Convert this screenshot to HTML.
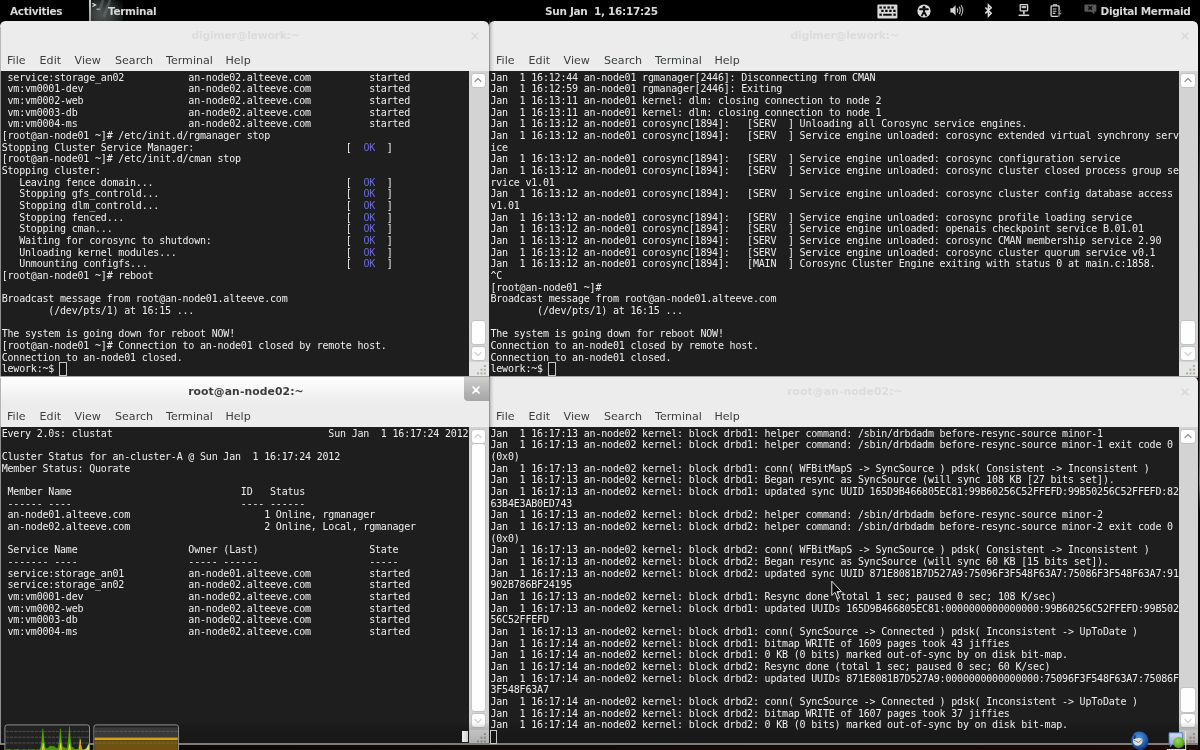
<!DOCTYPE html>
<html lang="en">
<head>
<meta charset="utf-8">
<title>Terminal</title>
<style>
html,body{margin:0;padding:0;}
body{width:1200px;height:750px;overflow:hidden;position:relative;background:#120907;font-family:"DejaVu Sans","Liberation Sans",sans-serif;}
#desk{position:absolute;left:0;top:0;width:1200px;height:750px;background:linear-gradient(90deg,#0b0908 0%,#0f0a08 35%,#160a07 60%,#1b0a07 85%,#200a07 100%);}
#deskr{position:absolute;left:1198px;top:21px;width:2px;height:729px;background:linear-gradient(90deg,#0a0606 0%,#0a0606 30%,rgba(10,6,6,0) 70%),linear-gradient(180deg,#050505 0px,#0a0505 90px,#5a0e08 130px,#b01a0a 170px,#7a1208 230px,#c4200c 300px,#8a1408 360px,#c02a0c 420px,#d8680e 462px,#a01808 476px,#120806 492px,#060505 729px);}
#topbar{position:absolute;left:0;top:0;width:1200px;height:28px;background:#000;}
.gl{will-change:transform;}
.tb{position:absolute;top:3.7px;font-weight:bold;font-size:10.5px;line-height:14px;color:#d8d8d8;white-space:pre;letter-spacing:-0.32px;}
.win{position:absolute;background:#ececec;overflow:hidden;}
.title{position:absolute;left:0;top:0;right:0;height:26px;}
.ttext{position:absolute;left:0;width:100%;text-align:center;top:7.8px;font-weight:bold;font-size:10.8px;line-height:14px;color:#dcdcdc;white-space:pre;}
.act .ttext{color:#3c3c3c;}
.act .title{background:linear-gradient(180deg,#ffffff 0%,#f6f6f6 50%,#ececec 100%);}
.x{position:absolute;}
.menu{position:absolute;top:31px;font-size:11.1px;line-height:14px;color:#3a3e40;white-space:pre;}
.term{position:absolute;background:#1e1e1e;}
.sb{position:absolute;background:#d3d3d3;}
.btn{position:absolute;left:2.6px;width:13.6px;background:#fefefe;border-radius:2.2px;box-shadow:0 0 0 0.7px #bcc0bc;}
.grip{position:absolute;left:0;width:100%;background:#e6e6e6;}
.l{position:absolute;white-space:pre;font-family:"DejaVu Sans Mono","Liberation Mono",monospace;font-size:10px;line-height:11.6667px;height:11.6667px;letter-spacing:-0.187px;color:#eeeeee;}
.ok{color:#6b6bd6;}
.cur{position:absolute;width:7.6px;height:13.5px;border:0.9px solid #c6c6c6;box-sizing:border-box;margin-top:-1px;margin-left:-0.8px;background:#151515;}
svg{position:absolute;overflow:visible;}
</style>
</head>
<body>
<div id="desk"></div>
<div id="deskr"></div>

<div id="topbar">
<div style="position:absolute;left:89px;top:0;width:34px;height:21px;background:radial-gradient(ellipse 26px 24px at 13px 15px,#4c5452 0%,#3a403f 35%,#1c1f1f 70%,#000 100%)"></div>
<div style="position:absolute;left:89px;top:0;width:1.6px;height:21px;background:linear-gradient(180deg,#cfcfcf,#9a9a9a)"></div>
<svg style="left:89px;top:0" width="34" height="21" viewBox="0 0 34 21"><path d="M3.4 3.2L6.6 4.9L3.4 6.6" stroke="#e8e8e8" stroke-width="1.1" fill="none"/><path d="M7.6 9.2H11.2" stroke="#cfcfcf" stroke-width="1.1"/><path d="M14 0L10.4 11M21 0L15 17" stroke="#69716f" stroke-width="2.6" opacity=".55"/></svg>
<svg style="left:876.6px;top:3.5px" width="21" height="15" viewBox="0 0 21 15"><rect x="0.4" y="0.4" width="20" height="14.2" rx="1" fill="#d9d9d9"/><rect x="2.4" y="2.4" width="2.4" height="2.2" fill="#0a0a0a"/><rect x="6.4" y="2.4" width="2.4" height="2.2" fill="#0a0a0a"/><rect x="10.4" y="2.4" width="2.4" height="2.2" fill="#0a0a0a"/><rect x="14.4" y="2.4" width="2.4" height="2.2" fill="#0a0a0a"/><rect x="4.2" y="5.8" width="2.4" height="2.2" fill="#0a0a0a"/><rect x="8.2" y="5.8" width="2.4" height="2.2" fill="#0a0a0a"/><rect x="12.2" y="5.8" width="2.4" height="2.2" fill="#0a0a0a"/><rect x="16.2" y="5.8" width="2.4" height="2.2" fill="#0a0a0a"/><rect x="2.4" y="9.6" width="2.4" height="2.2" fill="#0a0a0a"/><rect x="16.4" y="9.6" width="2.4" height="2.2" fill="#0a0a0a"/><rect x="6.2" y="9.8" width="8.6" height="1.9" fill="#0a0a0a"/></svg>
<svg style="left:916.6px;top:3.7px" width="14" height="14" viewBox="-7 -7 14 14"><circle r="6.6" fill="#dcdcdc"/><circle cy="-3.8" r="1.5" fill="#0a0a0a"/><path d="M-3.9 -1.7H3.9M0 -1.8V1.2M0 0.8L-2 4.4M0 0.8L2 4.4" stroke="#0a0a0a" stroke-width="1.9" stroke-linecap="round" fill="none"/></svg>
<svg style="left:949.8px;top:4.1px" width="15" height="13" viewBox="0 0 15 13"><path d="M0.4 4.2H2.6L5.6 1.2V11.6L2.6 8.6H0.4Z" fill="#d6d6d6"/><path d="M7.2 4.3Q8.6 6.4 7.2 8.5" stroke="#d6d6d6" stroke-width="1.2" fill="none"/><path d="M9.1 2.7Q11.6 6.4 9.1 10.1" stroke="#c4c4c4" stroke-width="1.2" fill="none"/><path d="M11 1.1Q14.6 6.4 11 11.7" stroke="#a8a8a8" stroke-width="1.2" fill="none"/></svg>
<svg style="left:984.4px;top:4.3px" width="9" height="13.4" viewBox="0 0 10 15"><path d="M1.4 4L8 10.4L4.9 13.6V0.9L8 4.1L1.4 10.5" stroke="#dcdcdc" stroke-width="1.7" fill="none" stroke-linejoin="miter"/></svg>
<svg style="left:1017.6px;top:4.4px" width="12" height="13" viewBox="0 0 12 13"><rect x="2.2" y="0.6" width="7.4" height="6.2" rx="0.6" fill="none" stroke="#d8d8d8" stroke-width="1.3"/><rect x="3.6" y="2" width="4.6" height="2.2" fill="#bdbdbd"/><path d="M5.9 7V10.6" stroke="#d8d8d8" stroke-width="1.6"/><path d="M0.6 11.3H11.2" stroke="#d8d8d8" stroke-width="1.5"/></svg>
<svg style="left:1049.6px;top:4.2px" width="13" height="14" viewBox="0 0 13 14"><path d="M3.6 1.6V0.7H6.6V1.6" stroke="#d8d8d8" stroke-width="1.1" fill="none"/><rect x="1.1" y="1.9" width="8" height="10.4" rx="0.8" fill="none" stroke="#d8d8d8" stroke-width="1.3"/><path d="M2.8 5H6.4M2.8 7.2H6.4M2.8 9.4H5.4" stroke="#d0d0d0" stroke-width="1.1"/><path d="M9.8 6.2L7.2 10.2H9.2L8 13.6L12.2 8.8H10L11.4 6.2Z" fill="#9c9c9c" stroke="#000" stroke-width="0.5"/></svg>
<svg style="left:1083.6px;top:4.4px" width="13" height="12" viewBox="0 0 13 12"><path d="M1.6 0.4H11.2Q12.4 0.4 12.4 1.6V6.6Q12.4 7.8 11.2 7.8H10.4V10.6L7.4 7.8H1.6Q0.4 7.8 0.4 6.6V1.6Q0.4 0.4 1.6 0.4Z" fill="#585858"/><path d="M4.4 2.2L8 5.8M8 2.2L4.4 5.8" stroke="#0a0a0a" stroke-width="1.5"/></svg>
<div class="gl">
<div class="tb" id="tb1" style="left:10px">Activities</div>
<div class="tb" id="tb2" style="left:108px">Terminal</div>
<div class="tb" id="tb3" style="left:545px">Sun Jan  1, 16:17:25</div>
<div class="tb" id="tb4" style="left:1100.5px">Digital Mermaid</div>
</div>
</div>

<div style="position:absolute;left:0;top:375.5px;width:1198px;height:2.4px;background:#a4a4a4"></div>
<div style="position:absolute;left:488.5px;top:21px;width:1.2px;height:722px;background:#3a3a3a"></div>
<div class="win" style="left:0.0px;top:20.9px;width:488.7px;height:354.8px;border-radius:5.5px 5.5px 0 0;">
<div class="title"></div>
<svg class="x" style="left:470.4px;top:10.0px" width="10" height="10" viewBox="-5 -5 10 10"><path d="M-2.9 -2.9L2.9 2.9M2.9 -2.9L-2.9 2.9" stroke="#d9dbd9" stroke-width="1.7" stroke-linecap="round" fill="none"/></svg>
<div class="gl">
<div class="ttext" style="top:8.4px;left:1.2px;letter-spacing:-0.25px">digimer@lework:~</div>
<div class="menu" style="left:7.0px;top:32.6px">File</div>
<div class="menu" style="left:39.6px;top:32.6px">Edit</div>
<div class="menu" style="left:74.6px;top:32.6px">View</div>
<div class="menu" style="left:115.0px;top:32.6px">Search</div>
<div class="menu" style="left:166.0px;top:32.6px">Terminal</div>
<div class="menu" style="left:225.4px;top:32.6px">Help</div>
</div>
<div class="term" style="left:0;top:50.2px;width:469.0px;height:304.6px"></div>
<div class="sb" style="left:469.0px;top:50.2px;width:19.7px;height:304.6px">
<div class="btn" style="top:2.5px;height:13.2px"></div><svg style="left:4.4px;top:5.1px" width="10" height="8" viewBox="-5 -4 10 8"><path d="M-3 1.5L0 -1.5L3 1.5" stroke="#8e8e8e" stroke-width="1.2" fill="none" stroke-linecap="round" stroke-linejoin="round"/></svg>
<div class="btn" style="top:249.6px;height:23.4px"></div>
<div class="btn" style="top:275.6px;height:13.4px"></div><svg style="left:4.4px;top:278.5px" width="10" height="8" viewBox="-5 -4 10 8"><path d="M-3 -1.5L0 1.5L3 -1.5" stroke="#d0d0d0" stroke-width="1.2" fill="none" stroke-linecap="round" stroke-linejoin="round"/></svg>
<div class="grip" style="top:291.2px;height:13.4px"></div>
<svg style="left:7.7px;top:294.3px" width="12" height="10" viewBox="0 0 12 10"><rect x="6.9" y="0.0" width="2" height="2" fill="#aab09e"/><rect x="3.5" y="3.7" width="2" height="2" fill="#aab09e"/><rect x="6.9" y="3.7" width="2" height="2" fill="#aab09e"/><rect x="0.0" y="7.4" width="2" height="2" fill="#aab09e"/><rect x="3.5" y="7.4" width="2" height="2" fill="#aab09e"/><rect x="6.9" y="7.4" width="2" height="2" fill="#aab09e"/></svg>
</div>
</div>
<div class="win" style="left:489.3px;top:20.9px;width:708.7px;height:354.8px;border-radius:5.5px 5.5px 0 0;">
<div class="title"></div>
<div style="position:absolute;left:0;top:0;width:5px;height:100%;background:linear-gradient(90deg,rgba(90,90,90,.75) 0%,rgba(150,150,150,.35) 35%,rgba(200,200,200,0) 100%)"></div>
<svg class="x" style="left:690.4px;top:10.0px" width="10" height="10" viewBox="-5 -5 10 10"><path d="M-2.9 -2.9L2.9 2.9M2.9 -2.9L-2.9 2.9" stroke="#d9dbd9" stroke-width="1.7" stroke-linecap="round" fill="none"/></svg>
<div class="gl">
<div class="ttext" style="top:8.4px;left:1.2px;letter-spacing:-0.25px">digimer@lework:~</div>
<div class="menu" style="left:7.0px;top:32.6px">File</div>
<div class="menu" style="left:39.6px;top:32.6px">Edit</div>
<div class="menu" style="left:74.6px;top:32.6px">View</div>
<div class="menu" style="left:115.0px;top:32.6px">Search</div>
<div class="menu" style="left:166.0px;top:32.6px">Terminal</div>
<div class="menu" style="left:225.4px;top:32.6px">Help</div>
</div>
<div class="term" style="left:0;top:50.2px;width:689.5px;height:304.6px"></div>
<div class="sb" style="left:689.5px;top:50.2px;width:19.2px;height:304.6px">
<div class="btn" style="top:2.5px;height:13.2px"></div><svg style="left:4.4px;top:5.1px" width="10" height="8" viewBox="-5 -4 10 8"><path d="M-3 1.5L0 -1.5L3 1.5" stroke="#8e8e8e" stroke-width="1.2" fill="none" stroke-linecap="round" stroke-linejoin="round"/></svg>
<div class="btn" style="top:249.6px;height:23.4px"></div>
<div class="btn" style="top:275.6px;height:13.4px"></div><svg style="left:4.4px;top:278.5px" width="10" height="8" viewBox="-5 -4 10 8"><path d="M-3 -1.5L0 1.5L3 -1.5" stroke="#d0d0d0" stroke-width="1.2" fill="none" stroke-linecap="round" stroke-linejoin="round"/></svg>
<div class="grip" style="top:291.2px;height:13.4px"></div>
<svg style="left:7.7px;top:294.3px" width="12" height="10" viewBox="0 0 12 10"><rect x="6.9" y="0.0" width="2" height="2" fill="#aab09e"/><rect x="3.5" y="3.7" width="2" height="2" fill="#aab09e"/><rect x="6.9" y="3.7" width="2" height="2" fill="#aab09e"/><rect x="0.0" y="7.4" width="2" height="2" fill="#aab09e"/><rect x="3.5" y="7.4" width="2" height="2" fill="#aab09e"/><rect x="6.9" y="7.4" width="2" height="2" fill="#aab09e"/></svg>
</div>
</div>
<div class="win act" style="left:0.0px;top:377.3px;width:488.7px;height:365.7px;border-radius:0;">
<div class="title"></div>
<div style="position:absolute;left:464.3px;top:0;width:24.4px;height:23.6px;border-radius:0 0 0 4px;background:linear-gradient(180deg,#cfcfcf 0%,#b4b4b4 60%,#a6a6a6 100%)"></div>
<svg class="x" style="left:470.7px;top:7.3px" width="10" height="10" viewBox="-5 -5 10 10"><path d="M-2.9 -2.9L2.9 2.9M2.9 -2.9L-2.9 2.9" stroke="#ffffff" stroke-width="1.9" stroke-linecap="round" fill="none"/></svg>
<div class="gl">
<div class="ttext" style="top:7.9px;left:1.6px;letter-spacing:0.09px">root@an-node02:~</div>
<div class="menu" style="left:7.0px;top:33.1px">File</div>
<div class="menu" style="left:39.6px;top:33.1px">Edit</div>
<div class="menu" style="left:74.6px;top:33.1px">View</div>
<div class="menu" style="left:115.0px;top:33.1px">Search</div>
<div class="menu" style="left:166.0px;top:33.1px">Terminal</div>
<div class="menu" style="left:225.4px;top:33.1px">Help</div>
</div>
<div class="term" style="left:0;top:50.0px;width:469.0px;height:315.7px"></div>
<div class="sb" style="left:469.0px;top:50.0px;width:19.7px;height:315.7px">
<div class="btn" style="top:2.5px;height:13.2px"></div><svg style="left:4.4px;top:5.1px" width="10" height="8" viewBox="-5 -4 10 8"><path d="M-3 1.5L0 -1.5L3 1.5" stroke="#cfcfcf" stroke-width="1.2" fill="none" stroke-linecap="round" stroke-linejoin="round"/></svg>
<div class="btn" style="top:17.0px;height:267.1px"></div>
<div class="btn" style="top:286.7px;height:13.4px"></div><svg style="left:4.4px;top:289.6px" width="10" height="8" viewBox="-5 -4 10 8"><path d="M-3 -1.5L0 1.5L3 -1.5" stroke="#d0d0d0" stroke-width="1.2" fill="none" stroke-linecap="round" stroke-linejoin="round"/></svg>
<div class="grip" style="top:302.3px;height:13.4px"></div>
<svg style="left:7.7px;top:305.4px" width="12" height="10" viewBox="0 0 12 10"><rect x="6.9" y="0.0" width="2" height="2" fill="#aab09e"/><rect x="3.5" y="3.7" width="2" height="2" fill="#aab09e"/><rect x="6.9" y="3.7" width="2" height="2" fill="#aab09e"/><rect x="0.0" y="7.4" width="2" height="2" fill="#aab09e"/><rect x="3.5" y="7.4" width="2" height="2" fill="#aab09e"/><rect x="6.9" y="7.4" width="2" height="2" fill="#aab09e"/></svg>
</div>
</div>
<div class="win" style="left:489.3px;top:377.3px;width:708.7px;height:365.7px;border-radius:0 5px 0 0;">
<div class="title"></div>
<div style="position:absolute;left:0;top:0;width:5px;height:100%;background:linear-gradient(90deg,rgba(90,90,90,.75) 0%,rgba(150,150,150,.35) 35%,rgba(200,200,200,0) 100%)"></div>
<svg class="x" style="left:690.4px;top:10.0px" width="10" height="10" viewBox="-5 -5 10 10"><path d="M-2.9 -2.9L2.9 2.9M2.9 -2.9L-2.9 2.9" stroke="#d9dbd9" stroke-width="1.7" stroke-linecap="round" fill="none"/></svg>
<div class="gl">
<div class="ttext" style="top:7.9px;left:1.6px;letter-spacing:0.09px">root@an-node02:~</div>
<div class="menu" style="left:7.0px;top:33.1px">File</div>
<div class="menu" style="left:39.6px;top:33.1px">Edit</div>
<div class="menu" style="left:74.6px;top:33.1px">View</div>
<div class="menu" style="left:115.0px;top:33.1px">Search</div>
<div class="menu" style="left:166.0px;top:33.1px">Terminal</div>
<div class="menu" style="left:225.4px;top:33.1px">Help</div>
</div>
<div class="term" style="left:0;top:50.0px;width:689.5px;height:315.7px"></div>
<div class="sb" style="left:689.5px;top:50.0px;width:19.2px;height:315.7px">
<div class="btn" style="top:2.5px;height:13.2px"></div><svg style="left:4.4px;top:5.1px" width="10" height="8" viewBox="-5 -4 10 8"><path d="M-3 1.5L0 -1.5L3 1.5" stroke="#8e8e8e" stroke-width="1.2" fill="none" stroke-linecap="round" stroke-linejoin="round"/></svg>
<div class="btn" style="top:260.4px;height:24.1px"></div>
<div class="btn" style="top:286.7px;height:13.4px"></div><svg style="left:4.4px;top:289.6px" width="10" height="8" viewBox="-5 -4 10 8"><path d="M-3 -1.5L0 1.5L3 -1.5" stroke="#d0d0d0" stroke-width="1.2" fill="none" stroke-linecap="round" stroke-linejoin="round"/></svg>
<div class="grip" style="top:302.3px;height:13.4px"></div>
<svg style="left:7.7px;top:305.4px" width="12" height="10" viewBox="0 0 12 10"><rect x="6.9" y="0.0" width="2" height="2" fill="#aab09e"/><rect x="3.5" y="3.7" width="2" height="2" fill="#aab09e"/><rect x="6.9" y="3.7" width="2" height="2" fill="#aab09e"/><rect x="0.0" y="7.4" width="2" height="2" fill="#aab09e"/><rect x="3.5" y="7.4" width="2" height="2" fill="#aab09e"/><rect x="6.9" y="7.4" width="2" height="2" fill="#aab09e"/></svg>
</div>
</div>
<div style="position:absolute;left:0;top:722px;width:1198px;height:21px;background:linear-gradient(180deg,rgba(0,0,0,0) 0%,rgba(0,0,0,.14) 30%,rgba(0,0,0,.24) 100%)"></div>
<div style="position:absolute;left:0;top:743px;width:1198px;height:1.6px;background:#7c7c7c"></div>
<div style="position:absolute;left:0;top:378px;width:1.1px;height:366px;background:linear-gradient(180deg,#b4b4b4 0,#b4b4b4 48px,#8e8e8e 50px,#8e8e8e 100%)"></div>
<div style="position:absolute;left:0;top:27px;width:1.1px;height:349px;background:linear-gradient(180deg,#b8b8b8 0,#b8b8b8 43px,#8e8e8e 45px,#8e8e8e 100%)"></div>

<div class="gl" id="t1">
<div class="l" style="left:7.53px;top:72.00px">service:storage_an02           an-node02.alteeve.com          started</div>
<div class="l" style="left:7.53px;top:83.00px">vm:vm0001-dev                  an-node02.alteeve.com          started</div>
<div class="l" style="left:7.53px;top:95.00px">vm:vm0002-web                  an-node02.alteeve.com          started</div>
<div class="l" style="left:7.53px;top:107.00px">vm:vm0003-db                   an-node02.alteeve.com          started</div>
<div class="l" style="left:7.53px;top:118.00px">vm:vm0004-ms                   an-node02.alteeve.com          started</div>
<div class="l" style="left:1.70px;top:130.00px">[root@an-node01 ~]# /etc/init.d/rgmanager stop</div>
<div class="l" style="left:1.70px;top:142.00px">Stopping Cluster Service Manager:                          [  <span class="ok">OK</span>  ]</div>
<div class="l" style="left:1.70px;top:153.00px">[root@an-node01 ~]# /etc/init.d/cman stop</div>
<div class="l" style="left:1.70px;top:165.00px">Stopping cluster:</div>
<div class="l" style="left:19.20px;top:177.00px">Leaving fence domain...                                 [  <span class="ok">OK</span>  ]</div>
<div class="l" style="left:19.20px;top:188.00px">Stopping gfs_controld...                                [  <span class="ok">OK</span>  ]</div>
<div class="l" style="left:19.20px;top:200.00px">Stopping dlm_controld...                                [  <span class="ok">OK</span>  ]</div>
<div class="l" style="left:19.20px;top:212.00px">Stopping fenced...                                      [  <span class="ok">OK</span>  ]</div>
<div class="l" style="left:19.20px;top:223.00px">Stopping cman...                                        [  <span class="ok">OK</span>  ]</div>
<div class="l" style="left:19.20px;top:235.00px">Waiting for corosync to shutdown:                       [  <span class="ok">OK</span>  ]</div>
<div class="l" style="left:19.20px;top:247.00px">Unloading kernel modules...                             [  <span class="ok">OK</span>  ]</div>
<div class="l" style="left:19.20px;top:258.00px">Unmounting configfs...                                  [  <span class="ok">OK</span>  ]</div>
<div class="l" style="left:1.70px;top:270.00px">[root@an-node01 ~]# reboot</div>
<div class="l" style="left:1.70px;top:293.00px">Broadcast message from root@an-node01.alteeve.com</div>
<div class="l" style="left:48.37px;top:305.00px">(/dev/pts/1) at 16:15 ...</div>
<div class="l" style="left:1.70px;top:328.00px">The system is going down for reboot NOW!</div>
<div class="l" style="left:1.70px;top:340.00px">[root@an-node01 ~]# Connection to an-node01 closed by remote host.</div>
<div class="l" style="left:1.70px;top:352.00px">Connection to an-node01 closed.</div>
<div class="l" style="left:1.70px;top:363.00px">lework:~$</div>
<div class="cur" style="left:60.03px;top:363.00px"></div>
</div>
<div class="gl" id="t2">
<div class="l" style="left:490.40px;top:72.00px">Jan  1 16:12:44 an-node01 rgmanager[2446]: Disconnecting from CMAN</div>
<div class="l" style="left:490.40px;top:83.00px">Jan  1 16:12:59 an-node01 rgmanager[2446]: Exiting</div>
<div class="l" style="left:490.40px;top:95.00px">Jan  1 16:13:11 an-node01 kernel: dlm: closing connection to node 2</div>
<div class="l" style="left:490.40px;top:107.00px">Jan  1 16:13:11 an-node01 kernel: dlm: closing connection to node 1</div>
<div class="l" style="left:490.40px;top:118.00px">Jan  1 16:13:12 an-node01 corosync[1894]:   [SERV  ] Unloading all Corosync service engines.</div>
<div class="l" style="left:490.40px;top:130.00px">Jan  1 16:13:12 an-node01 corosync[1894]:   [SERV  ] Service engine unloaded: corosync extended virtual synchrony serv</div>
<div class="l" style="left:490.40px;top:142.00px">ice</div>
<div class="l" style="left:490.40px;top:153.00px">Jan  1 16:13:12 an-node01 corosync[1894]:   [SERV  ] Service engine unloaded: corosync configuration service</div>
<div class="l" style="left:490.40px;top:165.00px">Jan  1 16:13:12 an-node01 corosync[1894]:   [SERV  ] Service engine unloaded: corosync cluster closed process group se</div>
<div class="l" style="left:490.40px;top:177.00px">rvice v1.01</div>
<div class="l" style="left:490.40px;top:188.00px">Jan  1 16:13:12 an-node01 corosync[1894]:   [SERV  ] Service engine unloaded: corosync cluster config database access</div>
<div class="l" style="left:490.40px;top:200.00px">v1.01</div>
<div class="l" style="left:490.40px;top:212.00px">Jan  1 16:13:12 an-node01 corosync[1894]:   [SERV  ] Service engine unloaded: corosync profile loading service</div>
<div class="l" style="left:490.40px;top:223.00px">Jan  1 16:13:12 an-node01 corosync[1894]:   [SERV  ] Service engine unloaded: openais checkpoint service B.01.01</div>
<div class="l" style="left:490.40px;top:235.00px">Jan  1 16:13:12 an-node01 corosync[1894]:   [SERV  ] Service engine unloaded: corosync CMAN membership service 2.90</div>
<div class="l" style="left:490.40px;top:247.00px">Jan  1 16:13:12 an-node01 corosync[1894]:   [SERV  ] Service engine unloaded: corosync cluster quorum service v0.1</div>
<div class="l" style="left:490.40px;top:258.00px">Jan  1 16:13:12 an-node01 corosync[1894]:   [MAIN  ] Corosync Cluster Engine exiting with status 0 at main.c:1858.</div>
<div class="l" style="left:490.40px;top:270.00px">^C</div>
<div class="l" style="left:490.40px;top:282.00px">[root@an-node01 ~]#</div>
<div class="l" style="left:490.40px;top:293.00px">Broadcast message from root@an-node01.alteeve.com</div>
<div class="l" style="left:537.07px;top:305.00px">(/dev/pts/1) at 16:15 ...</div>
<div class="l" style="left:490.40px;top:328.00px">The system is going down for reboot NOW!</div>
<div class="l" style="left:490.40px;top:340.00px">Connection to an-node01 closed by remote host.</div>
<div class="l" style="left:490.40px;top:352.00px">Connection to an-node01 closed.</div>
<div class="l" style="left:490.40px;top:363.00px">lework:~$</div>
<div class="cur" style="left:548.73px;top:363.00px"></div>
</div>
<div class="gl" id="t3">
<div class="l" style="left:1.70px;top:428.00px">Every 2.0s: clustat                                     Sun Jan  1 16:17:24 2012</div>
<div class="l" style="left:1.70px;top:451.00px">Cluster Status for an-cluster-A @ Sun Jan  1 16:17:24 2012</div>
<div class="l" style="left:1.70px;top:463.00px">Member Status: Quorate</div>
<div class="l" style="left:7.53px;top:486.00px">Member Name                             ID   Status</div>
<div class="l" style="left:7.53px;top:498.00px">------ ----                             ---- ------</div>
<div class="l" style="left:7.53px;top:509.00px">an-node01.alteeve.com                       1 Online, rgmanager</div>
<div class="l" style="left:7.53px;top:521.00px">an-node02.alteeve.com                       2 Online, Local, rgmanager</div>
<div class="l" style="left:7.53px;top:544.00px">Service Name                   Owner (Last)                   State</div>
<div class="l" style="left:7.53px;top:556.00px">------- ----                   ----- ------                   -----</div>
<div class="l" style="left:7.53px;top:568.00px">service:storage_an01           an-node01.alteeve.com          started</div>
<div class="l" style="left:7.53px;top:579.00px">service:storage_an02           an-node02.alteeve.com          started</div>
<div class="l" style="left:7.53px;top:591.00px">vm:vm0001-dev                  an-node02.alteeve.com          started</div>
<div class="l" style="left:7.53px;top:603.00px">vm:vm0002-web                  an-node02.alteeve.com          started</div>
<div class="l" style="left:7.53px;top:614.00px">vm:vm0003-db                   an-node02.alteeve.com          started</div>
<div class="l" style="left:7.53px;top:626.00px">vm:vm0004-ms                   an-node02.alteeve.com          started</div>
</div>
<div class="gl" id="t4">
<div class="l" style="left:490.40px;top:428.00px">Jan  1 16:17:13 an-node02 kernel: block drbd1: helper command: /sbin/drbdadm before-resync-source minor-1</div>
<div class="l" style="left:490.40px;top:439.00px">Jan  1 16:17:13 an-node02 kernel: block drbd1: helper command: /sbin/drbdadm before-resync-source minor-1 exit code 0</div>
<div class="l" style="left:490.40px;top:451.00px">(0x0)</div>
<div class="l" style="left:490.40px;top:463.00px">Jan  1 16:17:13 an-node02 kernel: block drbd1: conn( WFBitMapS -&gt; SyncSource ) pdsk( Consistent -&gt; Inconsistent )</div>
<div class="l" style="left:490.40px;top:474.00px">Jan  1 16:17:13 an-node02 kernel: block drbd1: Began resync as SyncSource (will sync 108 KB [27 bits set]).</div>
<div class="l" style="left:490.40px;top:486.00px">Jan  1 16:17:13 an-node02 kernel: block drbd1: updated sync UUID 165D9B466805EC81:99B60256C52FFEFD:99B50256C52FFEFD:82</div>
<div class="l" style="left:490.40px;top:498.00px">63B4E3AB0ED743</div>
<div class="l" style="left:490.40px;top:509.00px">Jan  1 16:17:13 an-node02 kernel: block drbd2: helper command: /sbin/drbdadm before-resync-source minor-2</div>
<div class="l" style="left:490.40px;top:521.00px">Jan  1 16:17:13 an-node02 kernel: block drbd2: helper command: /sbin/drbdadm before-resync-source minor-2 exit code 0</div>
<div class="l" style="left:490.40px;top:533.00px">(0x0)</div>
<div class="l" style="left:490.40px;top:544.00px">Jan  1 16:17:13 an-node02 kernel: block drbd2: conn( WFBitMapS -&gt; SyncSource ) pdsk( Consistent -&gt; Inconsistent )</div>
<div class="l" style="left:490.40px;top:556.00px">Jan  1 16:17:13 an-node02 kernel: block drbd2: Began resync as SyncSource (will sync 60 KB [15 bits set]).</div>
<div class="l" style="left:490.40px;top:568.00px">Jan  1 16:17:13 an-node02 kernel: block drbd2: updated sync UUID 871E8081B7D527A9:75096F3F548F63A7:75086F3F548F63A7:91</div>
<div class="l" style="left:490.40px;top:579.00px">902B786BF24195</div>
<div class="l" style="left:490.40px;top:591.00px">Jan  1 16:17:13 an-node02 kernel: block drbd1: Resync done (total 1 sec; paused 0 sec; 108 K/sec)</div>
<div class="l" style="left:490.40px;top:603.00px">Jan  1 16:17:13 an-node02 kernel: block drbd1: updated UUIDs 165D9B466805EC81:0000000000000000:99B60256C52FFEFD:99B502</div>
<div class="l" style="left:490.40px;top:614.00px">56C52FFEFD</div>
<div class="l" style="left:490.40px;top:626.00px">Jan  1 16:17:13 an-node02 kernel: block drbd1: conn( SyncSource -&gt; Connected ) pdsk( Inconsistent -&gt; UpToDate )</div>
<div class="l" style="left:490.40px;top:638.00px">Jan  1 16:17:14 an-node02 kernel: block drbd1: bitmap WRITE of 1609 pages took 43 jiffies</div>
<div class="l" style="left:490.40px;top:649.00px">Jan  1 16:17:14 an-node02 kernel: block drbd1: 0 KB (0 bits) marked out-of-sync by on disk bit-map.</div>
<div class="l" style="left:490.40px;top:661.00px">Jan  1 16:17:14 an-node02 kernel: block drbd2: Resync done (total 1 sec; paused 0 sec; 60 K/sec)</div>
<div class="l" style="left:490.40px;top:673.00px">Jan  1 16:17:14 an-node02 kernel: block drbd2: updated UUIDs 871E8081B7D527A9:0000000000000000:75096F3F548F63A7:75086F</div>
<div class="l" style="left:490.40px;top:684.00px">3F548F63A7</div>
<div class="l" style="left:490.40px;top:696.00px">Jan  1 16:17:14 an-node02 kernel: block drbd2: conn( SyncSource -&gt; Connected ) pdsk( Inconsistent -&gt; UpToDate )</div>
<div class="l" style="left:490.40px;top:708.00px">Jan  1 16:17:14 an-node02 kernel: block drbd2: bitmap WRITE of 1607 pages took 37 jiffies</div>
<div class="l" style="left:490.40px;top:719.00px">Jan  1 16:17:14 an-node02 kernel: block drbd2: 0 KB (0 bits) marked out-of-sync by on disk bit-map.</div>
<div class="cur" style="left:490.40px;top:731.00px"></div>
</div>

<div style="position:absolute;left:462.4px;top:730.8px;width:5.8px;height:11.4px;background:linear-gradient(90deg,#f4f4f4,#cfcfcf)"></div>
<svg style="left:3.6px;top:723.9px" width="87" height="27" viewBox="0 0 87 27"><rect x="0.9" y="0.9" width="84.6" height="30" rx="2.2" fill="#222222" stroke="#9c9c9c" stroke-width="0.9"/><path d="M1.6 7.4H85" stroke="#555555" stroke-width="0.9" stroke-dasharray="3.2 1"/><path d="M1.6 13.2H85" stroke="#555555" stroke-width="0.9" stroke-dasharray="3.2 1"/><path d="M1.6 19.0H85" stroke="#555555" stroke-width="0.9" stroke-dasharray="3.2 1"/><path d="M1.5 27.0L1.5 25.4L2.2 25.2L3.1 25.1L4.0 25.4L4.9 25.1L5.8 25.1L6.7 25.4L7.6 25.8L8.5 25.7L9.4 25.7L10.3 25.2L11.2 25.5L12.1 25.2L13.0 25.2L13.9 25.1L14.8 25.2L15.7 25.8L16.6 25.7L17.5 25.7L18.4 25.7L19.3 25.2L20.2 25.3L21.1 25.6L22.0 25.7L22.9 25.8L23.8 25.8L24.7 25.1L25.6 25.5L26.5 25.6L27.4 25.5L28.3 25.2L29.2 25.4L30.1 25.1L31.0 25.8L31.9 25.8L32.8 25.5L33.7 25.3L34.6 25.8L35.5 25.5L36.2 23.6L36.5 23.2L37.8 14.8L38.5 4.6L39.2 4.6L40.0 14.8L41.3 23.2L43.0 24.4L45.5 22.2L47.0 21.6L48.2 22.6L49.6 21.8L51.2 23.2L53.0 24.2L53.9 23.4L55.3 14.9L56.0 4.6L56.8 4.6L57.5 14.9L58.9 23.4L59.4 22.6L60.6 23.2L61.8 24.2L63.0 23.6L64.3 14.1L65.1 2.4L65.8 2.4L66.5 14.1L67.8 23.6L68.6 22.8L70.0 24.6L72.0 25.2L73.6 24.8L74.2 24.6L75.2 19.6L75.7 13.6L76.3 13.6L76.8 19.6L77.8 24.6L79.0 25.2L81.0 25.0L83.0 23.0L84.4 19.5L85.0 19.0L85.0 27.0Z" fill="#4a9608"/><path d="M37.8 24L38.9 5.2L40.0 24Z" fill="#5cb010" opacity=".8"/><path d="M55.3 24L56.4 5.2L57.5 24Z" fill="#5cb010" opacity=".8"/><path d="M64.3 24L65.4 3.0L66.5 24Z" fill="#5cb010" opacity=".8"/><path d="M1.5 27.0L1.5 26.2L2.2 26.4L3.3 26.4L4.4 26.3L5.5 26.2L6.6 26.3L7.7 26.2L8.8 26.1L9.9 26.2L11.0 26.4L12.1 26.0L13.2 26.0L14.3 26.3L15.4 26.1L16.5 26.3L17.6 26.2L18.7 26.2L19.8 26.5L20.9 26.1L22.0 26.2L23.1 26.1L24.2 26.3L25.3 26.1L26.4 26.2L27.5 26.4L28.6 26.2L29.7 26.3L30.8 26.5L31.9 26.1L33.0 26.0L34.1 26.1L35.2 26.4L37.5 26.2L38.4 23.0L38.9 19.0L39.6 19.0L40.0 23.0L40.9 26.2L46.0 26.2L52.0 26.3L55.0 26.2L55.9 23.0L56.4 19.0L57.1 19.0L57.5 23.0L58.4 26.2L61.0 26.3L64.0 26.2L64.9 23.1L65.4 19.4L66.0 19.4L66.5 23.1L67.4 26.2L70.0 26.3L73.6 26.2L74.8 26.2L75.6 21.3L76.0 15.4L76.6 15.4L77.0 21.3L77.8 26.2L80.0 26.2L82.6 24.5L84.4 20.6L85.0 20.4L85.0 27.0Z" fill="#e6e04c"/><path d="M38.0 27.0L38.0 27.0L39.5 23.4L41.0 27.0L55.6 27.0L57.0 23.2L58.4 27.0L64.6 27.0L66.0 23.6L67.3 27.0L74.8 27.0L76.5 17.4L78.2 27.0L78.2 27.0Z" fill="#e39a12"/></svg>
<svg style="left:92.6px;top:723.9px" width="87" height="27" viewBox="0 0 87 27"><rect x="0.9" y="0.9" width="84.6" height="30" rx="2.2" fill="#1f1f1f" stroke="#9c9c9c" stroke-width="0.9"/><rect x="1.6" y="3.4" width="83.2" height="10.6" fill="#3a3a3a"/><rect x="1.6" y="13.6" width="83.2" height="2.4" fill="#d3a410"/><rect x="1.6" y="16.2" width="83.2" height="11" fill="#6d5213"/><path d="M1.6 7.4H85" stroke="#5e5e5e" stroke-width="0.9" stroke-dasharray="3.2 1"/><path d="M1.6 19.0H85" stroke="#84692a" stroke-width="0.9" stroke-dasharray="3.2 1"/></svg>
<svg style="left:1130px;top:731px" width="20" height="19" viewBox="0 0 20 19"><defs><radialGradient id="tbg" cx="45%" cy="35%" r="70%"><stop offset="0" stop-color="#4a9ad8"/><stop offset=".6" stop-color="#2260b0"/><stop offset="1" stop-color="#0e2468"/></radialGradient></defs><path d="M5.5 1.2Q11 -0.6 15.6 3Q19.6 7 18 13Q16.6 17.6 12 19H9Q4 18 2 13.6Q0 8 3.2 4Q4 2 5.5 1.2Z" fill="url(#tbg)"/><path d="M3.2 8.6Q6.4 6.6 10.6 7.2Q13 7.6 12.6 10Q12 13.6 8.4 14.6Q5.2 15 3.6 12.4Q2.6 10.4 3.2 8.6Z" fill="#e4dfd6"/><path d="M4 9.2L8.4 11.4L12.4 8.4" stroke="#6a6a78" stroke-width="0.8" fill="none"/><path d="M4.6 4.4Q5.6 6 4.4 7.6" stroke="#0e1e50" stroke-width="1.1" fill="none"/></svg>
<svg style="left:1167px;top:730px" width="22" height="20" viewBox="0 0 22 20"><defs><linearGradient id="cbg" x1="0" y1="0" x2="0" y2="1"><stop offset="0" stop-color="#d4deee"/><stop offset="1" stop-color="#8aa0c6"/></linearGradient><radialGradient id="gbg" cx="40%" cy="35%" r="70%"><stop offset="0" stop-color="#9ad85a"/><stop offset=".7" stop-color="#5fae24"/><stop offset="1" stop-color="#3d7e12"/></radialGradient></defs><path d="M2 2.8H15.6V14H6L3.2 17V14H2Z" fill="url(#cbg)" stroke="#4c78b4" stroke-width="0.9"/><circle cx="11.8" cy="12.6" r="5.6" fill="url(#gbg)"/><path d="M18.7 1V20" stroke="#f0f0f0" stroke-width="1"/><path d="M0 19.5H18.7" stroke="#e0e0e0" stroke-width="1"/></svg>
<svg style="left:829px;top:579px" width="16" height="24" viewBox="0 0 16 24"><path d="M2.8 2.2V16.4L6 13.4L8.6 19.6L10.6 18.8L8 12.6H12.4Z" fill="#0a0a0a" stroke="#e6e6e6" stroke-width="1" stroke-linejoin="miter"/></svg>

</body>
</html>
